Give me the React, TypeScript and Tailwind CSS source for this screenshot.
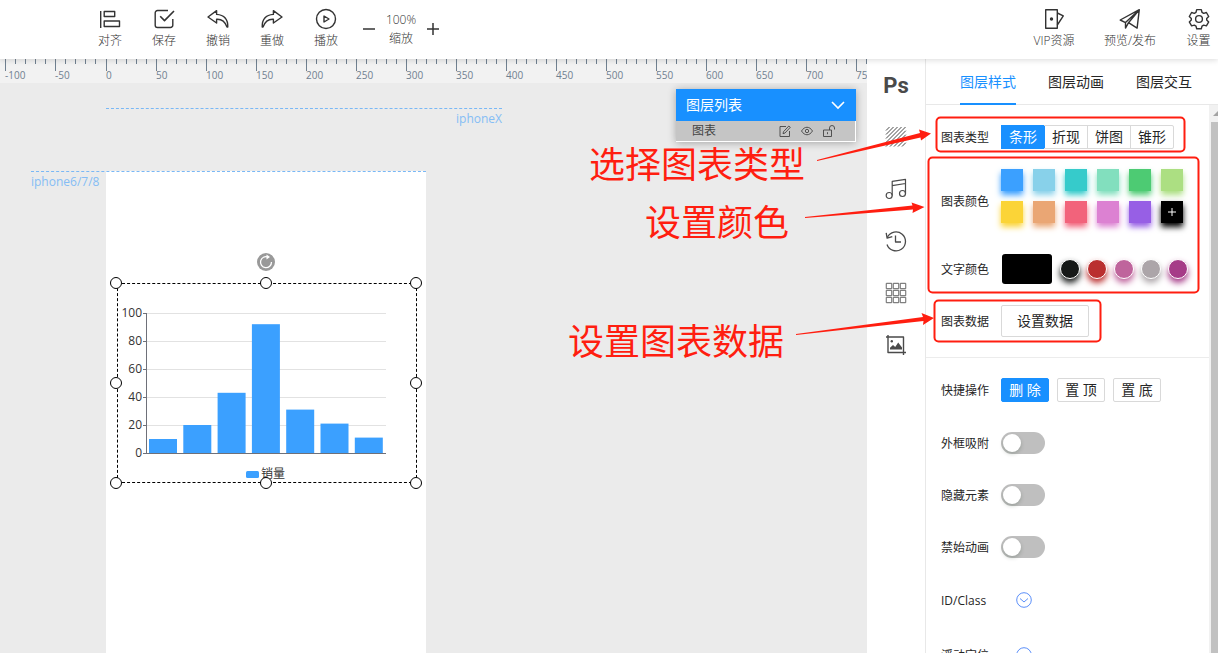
import type { ReactNode } from "react";

const CHART_COLORS = [
  { name: "蓝", className: "bg-[#3ba0ff] shadow-[0_4px_6px_#3ba0ff]" },
  { name: "浅蓝", className: "bg-[#88d1ea] shadow-[0_4px_6px_#88d1ea]" },
  { name: "青", className: "bg-[#36cbcb] shadow-[0_4px_6px_#36cbcb]" },
  { name: "浅青", className: "bg-[#82dfbe] shadow-[0_4px_6px_#82dfbe]" },
  { name: "绿", className: "bg-[#4dcb73] shadow-[0_4px_6px_#4dcb73]" },
  { name: "浅绿", className: "bg-[#acdf82] shadow-[0_4px_6px_#acdf82]" },
  { name: "黄", className: "bg-[#fbd437] shadow-[0_4px_6px_#fbd437]" },
  { name: "橙", className: "bg-[#eaa674] shadow-[0_4px_6px_#eaa674]" },
  { name: "红", className: "bg-[#f2637b] shadow-[0_4px_6px_#f2637b]" },
  { name: "粉", className: "bg-[#dc81d2] shadow-[0_4px_6px_#dc81d2]" },
  { name: "紫", className: "bg-[#975fe5] shadow-[0_4px_6px_#975fe5]" },
];

const TEXT_COLORS = [
  { name: "黑", className: "bg-[#161918] shadow-[0_4px_6px_#161918]" },
  { name: "红", className: "bg-[#ba2f2f] shadow-[0_4px_6px_#ba2f2f]" },
  { name: "粉", className: "bg-[#bf649c] shadow-[0_4px_6px_#bf649c]" },
  { name: "灰", className: "bg-[#aca5a9] shadow-[0_4px_6px_#aca5a9]" },
  { name: "紫", className: "bg-[#a63c88] shadow-[0_4px_6px_#a63c88]" },
];

const SALES = [10, 20, 43, 92, 31, 21, 11];

const Svg = ({ children, className = "size-[22px]" }: { children: ReactNode; className?: string }) => (
  <svg viewBox="0 0 22 22" fill="none" stroke="currentColor" strokeWidth="1.4" strokeLinejoin="round" className={className} aria-hidden="true">
    {children}
  </svg>
);

const AlignIcon = () => (
  <Svg>
    <path d="M1.7 3v17M5.2 3.5h10.5v5H5.2zM5.2 13h15.3v5.5H5.2z" />
  </Svg>
);

const SaveIcon = () => (
  <Svg>
    <path d="M15 2.5H4.5a2.3 2.3 0 0 0-2.3 2.3v12.4a2.3 2.3 0 0 0 2.3 2.3h13a2.3 2.3 0 0 0 2.3-2.3V11" />
    <path d="M7.2 8.3l4.3 4.3L21 3" strokeWidth="1.6" />
  </Svg>
);

const UndoPath = () => (
  <path d="M9.6 2.6L1 9l8.6 6v-3.8c4.8-.3 8.3 1.9 10.4 7.8h.8c.2-7.6-3.4-12-11.2-12.6z" />
);

const UndoIcon = () => (
  <Svg>
    <UndoPath />
  </Svg>
);

const RedoIcon = () => (
  <Svg>
    <g transform="matrix(-1 0 0 1 22 0)">
      <UndoPath />
    </g>
  </Svg>
);

const PlayIcon = () => (
  <Svg>
    <circle cx="11" cy="11" r="9.5" />
    <path d="M9 8v6l5-3z" />
  </Svg>
);

const VipIcon = () => (
  <Svg>
    <path d="M2.7 1.7h11.6v18.6H2.7z" />
    <path d="M14.3 5l6 2.8-6 9.2" />
    <circle cx="8.5" cy="11" r="1" fill="currentColor" />
  </Svg>
);

const PublishIcon = () => (
  <Svg>
    <path d="M20.3 1.7L1.2 12l5.3 2.6zM20.3 1.7L9.5 14.7M20.3 1.7l-2.2 18.4-8.6-5.4M6.5 14.6v5.5l3-5.4" />
  </Svg>
);

const GearIcon = () => (
  <Svg>
    <circle cx="11" cy="11" r="3.4" />
    <path d="M8.7 1.6h4.6l.7 2.7 1.7 1 2.7-.8 2.3 4-2 1.9v1.6l2 1.9-2.3 4-2.7-.8-1.7 1-.7 2.7H8.7L8 18.1l-1.7-1-2.7.8-2.3-4 2-1.9v-1.6l-2-1.9 2.3-4 2.7.8L8 4.3z" />
  </Svg>
);

const StripesIcon = () => (
  <Svg>
    <path
      strokeWidth="1"
      d="M1 4.500L4.500 1M1 8.500L8.500 1M1 12.500L12.500 1M1 16.500L16.500 1M1 20.500L20.500 1M5 20.500L20.800 4.700M9 20.500L20.800 8.700M13 20.500l7.800-7.800M17 20.500l3.800-3.800"
    />
  </Svg>
);

const MusicIcon = () => (
  <Svg>
    <g strokeWidth="1.2">
      <circle cx="4.2" cy="17.5" r="3" />
      <circle cx="17.5" cy="15.5" r="3" />
      <path d="M7.2 17.5V3.4L20.5 1.3v14.2M7.2 7.6l13.3-2.1" />
    </g>
  </Svg>
);

const HistoryIcon = () => (
  <Svg>
    <g strokeWidth="1.3">
      <path d="M2.4 7.3A9.500 9.500 0 1 1 2 14.500" />
      <path d="M1.2 2.8l.9 5.4 5.2-1.6M10.5 5.500V12H16" />
    </g>
  </Svg>
);

const GridIcon = () => (
  <Svg className="size-[22px] text-[#808080]">
    {[1, 8, 15].map((y) =>
      [1, 8, 15].map((x) => <rect key={`${x}-${y}`} x={x + 0.3} y={y + 0.3} width="5.4" height="5.4" rx="0.5" strokeWidth="1.2" />)
    )}
  </Svg>
);

const CropImageIcon = () => (
  <Svg>
    <path d="M3 1v17.500h18M1 3h17.500v18" />
    <circle cx="6.8" cy="7.2" r="1.2" fill="currentColor" stroke="none" />
    <path d="M5 15.500v-1.800l3-2.700 2.200 2 3-4.500 3.800 5v2z" fill="currentColor" stroke="none" />
  </Svg>
);

const ToolButton = ({ label, children, className = "w-[54px]" }: { label: string; children: ReactNode; className?: string }) => (
  <button type="button" className={`flex shrink-0 flex-col items-center gap-[2px] ${className}`}>
    {children}
    <span className="text-xs leading-[18px] whitespace-nowrap">{label}</span>
  </button>
);

const Header = () => (
  <header className="relative z-20 flex h-[59px] shrink-0 items-start bg-white pt-2 pl-[83px] font-light text-[#333] shadow-[0_1px_6px_rgba(0,0,0,0.15)]">
    <ToolButton label="对齐"><AlignIcon /></ToolButton>
    <ToolButton label="保存"><SaveIcon /></ToolButton>
    <ToolButton label="撤销"><UndoIcon /></ToolButton>
    <ToolButton label="重做"><RedoIcon /></ToolButton>
    <ToolButton label="播放"><PlayIcon /></ToolButton>
    <div className="ml-[9px] flex items-center gap-[10px] pt-[2px]">
      <button type="button" aria-label="缩小">
        <svg viewBox="0 0 14 14" className="size-[14px]" stroke="currentColor" strokeWidth="1.5"><path d="M1 7h12" /></svg>
      </button>
      <div className="flex w-[30px] flex-col items-center text-xs leading-[19px]">
        <span>100%</span>
        <span>缩放</span>
      </div>
      <button type="button" aria-label="放大">
        <svg viewBox="0 0 14 14" className="size-[14px]" stroke="currentColor" strokeWidth="1.5"><path d="M1 7h12M7 1v12" /></svg>
      </button>
    </div>
    <div className="ml-auto flex">
      <ToolButton label="VIP资源" className="w-[76px]"><VipIcon /></ToolButton>
      <ToolButton label="预览/发布" className="w-[76px]"><PublishIcon /></ToolButton>
      <ToolButton label="设置" className="ml-[14px] mr-[3px] w-[33px]"><GearIcon /></ToolButton>
    </div>
  </header>
);

const Ruler = () => (
  <div className="flex h-6 shrink-0 overflow-hidden bg-[#f2f2f2] pl-[5px] text-[#708090]">
    {Array.from({ length: 18 }, (_, i) => (i - 2) * 50).map((value) => (
      <div key={value} className={`relative flex shrink-0 gap-[9px] ${value === -50 ? "w-[51px]" : "w-[50px]"}`}>
        <i className="h-3 w-px bg-current" />
        <i className="h-[5px] w-px bg-current" />
        <i className="h-[5px] w-px bg-current" />
        <i className="h-[5px] w-px bg-current" />
        <i className="h-[5px] w-px bg-current" />
        <span className="absolute top-[10px] left-0 text-[10px] leading-3">{value}</span>
      </div>
    ))}
  </div>
);

const BarChart = () => (
  <svg viewBox="0 0 300 200" className="absolute -top-px -left-px h-[200px] w-[300px]" role="img" aria-label="销量">
    {[100, 80, 60, 40, 20, 0].map((value) => {
      const y = 170.5 - value * 1.4;
      return (
        <g key={value}>
          <path d={`M29 ${y}h240`} stroke={value === 0 ? "#6e7079" : "#e2e2e2"} />
          <path d={`M26 ${y}h3`} stroke="#6e7079" />
          <text x="25" y={y + 3} textAnchor="end" fontSize="12" fill="#333">{value}</text>
        </g>
      );
    })}
    {SALES.map((value, i) => (
      <rect key={i} x={32 + i * 34.3} y={170 - value * 1.4} width="28" height={value * 1.4} fill="#3ba0ff" />
    ))}
    <path d="M29.5 30v141" stroke="#6e7079" />
    <rect x="129" y="188" width="13" height="7" rx="1.5" fill="#3ba0ff" />
    <text x="144" y="195" fontSize="12" fill="#333">销量</text>
  </svg>
);

const HANDLES = [
  "-top-[7px] -left-[8px]",
  "-top-[7px] left-[142px]",
  "-top-[7px] -right-[6px]",
  "top-[93px] -left-[8px]",
  "top-[93px] -right-[6px]",
  "-bottom-[7px] -left-[8px]",
  "-bottom-[7px] left-[142px]",
  "-bottom-[7px] -right-[6px]",
];

const LayerList = () => (
  <section className="absolute top-[6px] right-[11px] w-[180px] shadow-[0_1px_8px_rgba(0,0,0,0.3)]">
    <button type="button" className="flex h-8 w-full items-center justify-between bg-[#1890ff] px-[10px] text-sm text-white">
      图层列表
      <svg viewBox="0 0 16 16" className="size-4" fill="none" stroke="currentColor" strokeWidth="1.6"><path d="M2 5l6 6 6-6" /></svg>
    </button>
    <div className="flex h-[21px] items-center border-r border-b border-white bg-[#c5c5c5] pr-5 pl-4 text-xs text-[#444]">
      <span className="mr-auto">图表</span>
      <div className="flex gap-[10px]">
        <button type="button" aria-label="编辑">
          <svg viewBox="0 0 12 12" className="size-3" fill="none" stroke="currentColor" strokeWidth="0.9">
            <path d="M7 1.500H1v10h9.500V6M4 8.700l.5-2L9.800 1l1.500 1.300L6 8z" />
          </svg>
        </button>
        <button type="button" aria-label="显示">
          <svg viewBox="0 0 12 12" className="size-3" fill="none" stroke="currentColor" strokeWidth="0.9">
            <path d="M.5 6C3.500 1 8.500 1 11.500 6 8.500 11 3.500 11 .5 6z" />
            <circle cx="6" cy="6" r="1.7" />
          </svg>
        </button>
        <button type="button" aria-label="解锁">
          <svg viewBox="0 0 12 12" className="size-3" fill="none" stroke="currentColor" strokeWidth="0.9">
            <path d="M.5 5h8v6.500h-8zM4.500 7.200v2M6.500 5V3a2.500 2.500 0 0 1 5 0v1.500" />
          </svg>
        </button>
      </div>
    </div>
  </section>
);

// device guides, the phone page and the selected chart are placed freely on the canvas
const Canvas = () => (
  <div className="relative flex-1 overflow-hidden bg-[#ebebeb] text-xs text-[#85bdf5]">
    <div className="absolute top-[25px] left-[106px] w-[396px] border-t border-dashed border-[#7ab8f5] pt-[2px] text-right leading-4">
      iphoneX
    </div>
    <div className="absolute top-[88px] bottom-0 left-[106px] w-[320px] bg-white" />
    <div className="absolute top-[88px] left-[31px] w-[395px] border-t border-dashed border-[#7ab8f5] pt-[2px] leading-4">iphone6/7/8</div>
    <div className="absolute top-[200px] left-[117px] h-[200px] w-[300px] border border-dashed border-black">
      <BarChart />
      {HANDLES.map((position) => (
        <i key={position} className={`absolute size-3 rounded-full border border-black bg-white ${position}`} />
      ))}
      <button type="button" aria-label="旋转" className="absolute -top-[31px] left-[139px]">
        <svg viewBox="0 0 18 18" className="size-[18px]" fill="none" stroke="#fff" strokeWidth="1.3">
          <circle cx="9" cy="9" r="9" fill="#999" stroke="none" />
          <path d="M11 4A5.500 5.500 0 1 0 14.500 9" />
          <path d="M9.500 1.500v5L13 4z" fill="#fff" stroke="none" />
        </svg>
      </button>
    </div>
    <LayerList />
  </div>
);

const RailButton = ({ label, children }: { label: string; children: ReactNode }) => (
  <button type="button" aria-label={label} className="flex h-[52px] w-full items-center justify-center">
    {children}
  </button>
);

const Rail = () => (
  <nav className="w-[58px] shrink-0 bg-white text-[#4a4a4a]">
    <RailButton label="Ps">
      <span className="font-['Liberation_Sans_Narrow','Roboto',sans-serif] text-[22px] font-bold">Ps</span>
    </RailButton>
    <RailButton label="背景"><StripesIcon /></RailButton>
    <RailButton label="音乐"><MusicIcon /></RailButton>
    <RailButton label="历史"><HistoryIcon /></RailButton>
    <RailButton label="组件"><GridIcon /></RailButton>
    <RailButton label="图片"><CropImageIcon /></RailButton>
  </nav>
);

const rowLabel = "w-[60px] shrink-0 pt-[2px] text-xs leading-4";

const Row = ({ label, children, className }: { label: string; children: ReactNode; className: string }) => (
  <div className={`flex items-center ${className}`}>
    <span className={rowLabel}>{label}</span>
    {children}
  </div>
);

const Toggle = ({ label }: { label: string }) => (
  <label className="mt-[30px] flex h-[22px] items-center">
    <span className={rowLabel}>{label}</span>
    <input
      type="checkbox"
      role="switch"
      className="h-[22px] w-11 appearance-none rounded-full bg-[#bfbfbf] p-[2px] before:block before:size-[18px] before:rounded-full before:bg-white before:shadow-[0_2px_4px_rgba(0,35,11,0.2)] checked:bg-[#1890ff] checked:before:ml-[22px]"
    />
  </label>
);

const ExpandButton = ({ label }: { label: string }) => (
  <button type="button" aria-label={label} className="ml-[15px] text-[#5b8ff9]">
    <svg viewBox="0 0 16 16" className="size-4" fill="none" stroke="currentColor">
      <circle cx="8" cy="8" r="7.3" />
      <path d="M4 6.500L8 10l4-3.500" />
    </svg>
  </button>
);

const smallButton = "h-6 w-12 rounded-[2px] border text-sm leading-5";
const tab = "-mb-px border-b-2 pt-[2px]";

const StylePanel = () => (
  <aside className="flex w-[293px] shrink-0 flex-col border-l border-[#e8e8e8] bg-white text-[#262626]">
    <div role="tablist" className="flex h-[46px] shrink-0 gap-8 border-b border-[#e8e8e8] pl-[34px] text-sm">
      <button type="button" role="tab" aria-selected="true" className={`${tab} border-[#1890ff] text-[#1890ff]`}>图层样式</button>
      <button type="button" role="tab" aria-selected="false" className={`${tab} border-transparent`}>图层动画</button>
      <button type="button" role="tab" aria-selected="false" className={`${tab} border-transparent`}>图层交互</button>
    </div>
    <div className="flex min-h-0 flex-1">
      <div className="min-w-0 flex-1 overflow-hidden">
        <div className="border-b border-[#ececec] pt-5 pb-5 pl-[15px]">
          <Row label="图表类型" className="h-6">
            <div className="flex text-sm leading-5">
              <button type="button" className="h-6 w-11 border border-[#1890ff] bg-[#1890ff] text-white">条形</button>
              <button type="button" className="-ml-px h-6 w-11 border border-l-0 border-[#d9d9d9] pl-px">折现</button>
              <button type="button" className="-ml-px h-6 w-11 border border-[#d9d9d9]">饼图</button>
              <button type="button" className="-ml-px h-6 w-11 rounded-r-[2px] border border-[#d9d9d9]">锥形</button>
            </div>
          </Row>
          <Row label="图表颜色" className="mt-5 h-16">
            <div className="grid grid-cols-[repeat(6,22px)] gap-[10px] pb-[10px]">
              {CHART_COLORS.map(({ name, className }) => (
                <button key={name} type="button" aria-label={name} className={`size-[22px] ${className}`} />
              ))}
              <button type="button" aria-label="添加颜色" className="flex size-[22px] items-center justify-center bg-black text-white shadow-[0_4px_6px_#000]">
                <svg viewBox="0 0 8 8" className="size-2" stroke="currentColor"><path d="M0 4h8M4 0v8" /></svg>
              </button>
            </div>
          </Row>
          <Row label="文字颜色" className="mt-[21px] h-[30px]">
            <button type="button" aria-label="当前文字颜色" className="ml-px h-[30px] w-[50px] rounded-[3px] bg-black" />
            <div className="ml-2 flex gap-[7px]">
              {TEXT_COLORS.map(({ name, className }) => (
                <button key={name} type="button" aria-label={name} className={`size-5 rounded-full border border-white ${className}`} />
              ))}
            </div>
          </Row>
          <Row label="图表数据" className="mt-[21px] h-8">
            <button type="button" className="h-8 w-[88px] rounded-[2px] border border-[#d9d9d9] text-sm">设置数据</button>
          </Row>
        </div>
        <div className="pt-5 pl-[15px]">
          <Row label="快捷操作" className="h-6">
            <div className="flex gap-2">
              <button type="button" className={`${smallButton} border-[#1890ff] bg-[#1890ff] text-white`}>删 除</button>
              <button type="button" className={`${smallButton} border-[#d9d9d9]`}>置 顶</button>
              <button type="button" className={`${smallButton} border-[#d9d9d9]`}>置 底</button>
            </div>
          </Row>
          <Toggle label="外框吸附" />
          <Toggle label="隐藏元素" />
          <Toggle label="禁始动画" />
          <Row label="ID/Class" className="mt-[34px] h-4"><ExpandButton label="展开 ID/Class" /></Row>
          <Row label="浮动定位" className="mt-[39px] h-4"><ExpandButton label="展开浮动定位" /></Row>
        </div>
      </div>
      <div className="flex w-[9px] shrink-0 flex-col bg-[#f1f1f1] pl-[2px]">
        <svg viewBox="0 0 7 17" className="h-[17px] w-[7px]"><path d="M2 11l5-5v5z" fill="#a3a3a3" /></svg>
        <div className="flex-1 bg-[#c1c1c1]" />
      </div>
    </div>
  </aside>
);

const note = "absolute text-4xl leading-10 whitespace-nowrap";

// red guide notes lie over the editor and keep to its right edge
const Guide = () => (
  <div className="pointer-events-none absolute top-0 right-0 z-30 h-[360px] w-[660px] text-[#ff1e10]">
    <svg viewBox="558 0 660 360" className="size-full" fill="none" stroke="currentColor" strokeWidth="2">
      <rect x="936.5" y="117.5" width="248" height="34" rx="4" />
      <rect x="928.5" y="157.5" width="270" height="135" rx="4" />
      <rect x="934.5" y="300.5" width="166" height="41" rx="4" />
      <g fill="currentColor" stroke="none">
        <path d="M817 160l103-27-1-3.500 12 4-10 7-.5-3-103.500 23.500z" />
        <path d="M805 217l107.500-11.500-1-3 13 4.500-12 6 .5-3.500-108 8.500z" />
        <path d="M796 334l127-17-1.500-4 12.500 5-11 7 .5-4-127.500 14z" />
      </g>
    </svg>
    <p className={`${note} top-[145px] left-[31px]`}>选择图表类型</p>
    <p className={`${note} top-[203px] left-[87px]`}>设置颜色</p>
    <p className={`${note} top-[322px] left-[10px]`}>设置图表数据</p>
  </div>
);

export default function App() {
  return (
    <div className="relative flex h-screen flex-col overflow-hidden font-['Open_Sans','Noto_Sans_CJK_SC',sans-serif]">
      <Header />
      <div className="flex min-h-0 flex-1">
        <main className="flex min-w-0 flex-1 flex-col">
          <Ruler />
          <Canvas />
        </main>
        <Rail />
        <StylePanel />
      </div>
      <Guide />
    </div>
  );
}
